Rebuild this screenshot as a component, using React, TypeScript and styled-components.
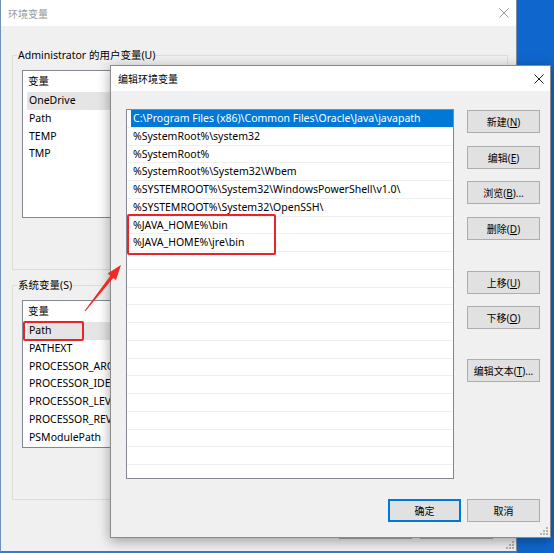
import React from 'react';
import styled, { createGlobalStyle } from 'styled-components';

const FONT = `"Noto Sans", "Noto Sans CJK SC", sans-serif`;

const GlobalStyle = createGlobalStyle`
  html, body { margin: 0; padding: 0; }
  body {
    width: 554px;
    height: 553px;
    overflow: hidden;
    font-family: ${FONT};
    font-size: 10.5px;
    color: #000;
  }
`;

const Desktop = styled.div`
  position: relative;
  width: 554px;
  height: 553px;
  background: #0f67cd;
  overflow: hidden;
  font-family: ${FONT};
  font-size: 10.5px;
`;

const MainWindow = styled.div`
  position: absolute;
  left: 0;
  top: 0;
  width: 517px;
  height: 553px;
  box-sizing: border-box;
  border-left: 1px solid #6f93b8;
  border-right: 1px solid #7d8ea3;
  border-bottom: 2px solid #2f7dd1;
  background: #f0f0f0;
  display: flex;
  flex-direction: column;
`;

const TitleBar = styled.div<{ $height: number; $inactive?: boolean; $padRight: number }>`
  flex: none;
  height: ${(p) => p.$height}px;
  background: #fff;
  display: flex;
  align-items: center;
  justify-content: space-between;
  padding: 0 ${(p) => p.$padRight}px 0 7px;
  color: ${(p) => (p.$inactive ? '#999' : '#000')};
  font-size: 10px;
`;

const WindowBody = styled.div`
  position: relative;
  flex: 1;
  display: flex;
  flex-direction: column;
  padding: 29px 0 0 11px;
`;

const GroupBox = styled.div<{ $mt: number }>`
  position: relative;
  margin-top: ${(p) => p.$mt}px;
  width: 496px;
  height: 215px;
  box-sizing: border-box;
  border: 1px solid #dcdcdc;
  padding: 14px 9px 0 9px;
  display: flex;
  flex-direction: column;
`;

const GroupLabel = styled.span`
  position: absolute;
  left: 4px;
  top: -8px;
  padding: 0 1px;
  background: #f0f0f0;
  line-height: 14px;
`;

const VarList = styled.div`
  height: 148px;
  box-sizing: border-box;
  border: 1px solid #828790;
  background: #fff;
  overflow: hidden;
`;

const VarHeader = styled.div`
  height: 21px;
  line-height: 21px;
  padding-left: 5px;
`;

const VarRow = styled.div<{ $selected?: boolean }>`
  height: 17.75px;
  line-height: 17.75px;
  margin-left: 4px;
  padding-left: 2px;
  background: ${(p) => (p.$selected ? '#e5e5e5' : 'transparent')};
  white-space: nowrap;
`;

const WindowButtons = styled.div`
  display: flex;
  justify-content: flex-end;
  gap: 8px;
  margin-top: 16px;
  padding-right: 23px;
`;

const Button = styled.button<{ $mt?: number; $default?: boolean }>`
  width: 73px;
  height: 23px;
  margin-top: ${(p) => p.$mt ?? 0}px;
  box-sizing: border-box;
  padding: 0;
  background: #e1e1e1;
  border: 1px solid ${(p) => (p.$default ? '#0078d7' : '#adadad')};
  box-shadow: ${(p) => (p.$default ? 'inset 0 0 0 1px #0078d7' : 'none')};
  font-family: ${FONT};
  font-size: 10px;
  color: #000;
  white-space: nowrap;
  u { text-decoration: underline; text-underline-offset: 1px; }
`;

const Grip = styled.svg`
  position: absolute;
  right: 2px;
  bottom: 2px;
`;

const Dialog = styled.div`
  position: absolute;
  left: 110px;
  top: 65px;
  width: 441px;
  height: 473px;
  box-sizing: border-box;
  border: 1px solid #8a8a8a;
  background: #f0f0f0;
  box-shadow: 0 3px 12px rgba(0, 0, 0, 0.35);
  display: flex;
  flex-direction: column;
`;

const DialogBody = styled.div`
  position: relative;
  flex: 1;
  display: flex;
  flex-direction: column;
  padding: 18px 10px 0 15px;
`;

const MainRow = styled.div`
  display: flex;
  gap: 13px;
`;

const EnvList = styled.div`
  width: 328px;
  height: 370px;
  box-sizing: border-box;
  border: 1px solid #828790;
  background: #fff;
  overflow: hidden;
`;

const EnvRow = styled.div`
  height: 17.75px;
  box-sizing: border-box;
  border-bottom: 1px solid #efefef;
  padding-left: 4px;
  display: flex;
`;

const EnvItem = styled.div<{ $selected?: boolean }>`
  flex: 1;
  line-height: 16.75px;
  padding-left: 2px;
  white-space: nowrap;
  background: ${(p) => (p.$selected ? '#0078d7' : 'transparent')};
  color: ${(p) => (p.$selected ? '#fff' : '#000')};
`;

const ButtonColumn = styled.div`
  display: flex;
  flex-direction: column;
  width: 73px;
`;

const BottomRow = styled.div`
  display: flex;
  justify-content: flex-end;
  gap: 6px;
  margin-top: 20px;
`;

const RedBox = styled.div<{ $x: number; $y: number; $w: number; $h: number }>`
  position: absolute;
  left: ${(p) => p.$x}px;
  top: ${(p) => p.$y}px;
  width: ${(p) => p.$w}px;
  height: ${(p) => p.$h}px;
  box-sizing: border-box;
  border: 2px solid #e8232a;
  border-radius: 2px;
  pointer-events: none;
`;

const Arrow = styled.svg`
  position: absolute;
  left: 0;
  top: 0;
  pointer-events: none;
`;

const CloseIcon = ({ color }: { color: string }) => (
  <svg width="10" height="10" viewBox="0 0 10 10">
    <path d="M0.5 0.5 L9.5 9.5 M9.5 0.5 L0.5 9.5" stroke={color} strokeWidth="1" fill="none" />
  </svg>
);

const GripIcon = () => (
  <Grip width="8" height="8" viewBox="0 0 8 8">
    <g fill="#b4b4b4">
      <rect x="6" y="0" width="2" height="2" />
      <rect x="3" y="3" width="2" height="2" />
      <rect x="6" y="3" width="2" height="2" />
      <rect x="0" y="6" width="2" height="2" />
      <rect x="3" y="6" width="2" height="2" />
      <rect x="6" y="6" width="2" height="2" />
    </g>
  </Grip>
);

const userVars = ['OneDrive', 'Path', 'TEMP', 'TMP'];
const sysVars = [
  'Path',
  'PATHEXT',
  'PROCESSOR_ARCHITECTURE',
  'PROCESSOR_IDENTIFIER',
  'PROCESSOR_LEVEL',
  'PROCESSOR_REVISION',
  'PSModulePath',
];

const pathEntries = [
  'C:\\Program Files (x86)\\Common Files\\Oracle\\Java\\javapath',
  '%SystemRoot%\\system32',
  '%SystemRoot%',
  '%SystemRoot%\\System32\\Wbem',
  '%SYSTEMROOT%\\System32\\WindowsPowerShell\\v1.0\\',
  '%SYSTEMROOT%\\System32\\OpenSSH\\',
  '%JAVA_HOME%\\bin',
  '%JAVA_HOME%\\jre\\bin',
];

const TOTAL_ROWS = 21;

export default function App() {
  const rows = Array.from({ length: TOTAL_ROWS }, (_, i) => pathEntries[i] ?? '');
  return (
    <>
      <GlobalStyle />
      <Desktop>
        <MainWindow>
          <TitleBar $height={26} $inactive $padRight={7}>
            <span>环境变量</span>
            <CloseIcon color="#9a9a9a" />
          </TitleBar>
          <WindowBody>
            <GroupBox $mt={0}>
              <GroupLabel>Administrator 的用户变量(U)</GroupLabel>
              <VarList>
                <VarHeader>变量</VarHeader>
                {userVars.map((v, i) => (
                  <VarRow key={v} $selected={i === 0}>
                    {v}
                  </VarRow>
                ))}
              </VarList>
            </GroupBox>
            <GroupBox $mt={15}>
              <GroupLabel>系统变量(S)</GroupLabel>
              <VarList>
                <VarHeader>变量</VarHeader>
                {sysVars.map((v, i) => (
                  <VarRow key={v} $selected={i === 0}>
                    {v}
                  </VarRow>
                ))}
              </VarList>
            </GroupBox>
            <WindowButtons>
              <Button>确定</Button>
              <Button>取消</Button>
            </WindowButtons>
            <GripIcon />
          </WindowBody>
        </MainWindow>

        <Dialog>
          <TitleBar $height={25} $padRight={6}>
            <span>编辑环境变量</span>
            <CloseIcon color="#1e1e1e" />
          </TitleBar>
          <DialogBody>
            <MainRow>
              <EnvList>
                {rows.map((r, i) => (
                  <EnvRow key={i}>
                    <EnvItem $selected={i === 0}>{r}</EnvItem>
                  </EnvRow>
                ))}
              </EnvList>
              <ButtonColumn>
                <Button $mt={1}>
                  新建(<u>N</u>)
                </Button>
                <Button $mt={13}>
                  编辑(<u>E</u>)
                </Button>
                <Button $mt={12}>
                  浏览(<u>B</u>)...
                </Button>
                <Button $mt={13}>
                  删除(<u>D</u>)
                </Button>
                <Button $mt={31}>
                  上移(<u>U</u>)
                </Button>
                <Button $mt={12}>
                  下移(<u>O</u>)
                </Button>
                <Button $mt={30}>
                  编辑文本(<u>T</u>)...
                </Button>
              </ButtonColumn>
            </MainRow>
            <BottomRow>
              <Button $default>确定</Button>
              <Button>取消</Button>
            </BottomRow>
            <GripIcon />
          </DialogBody>
        </Dialog>

        <RedBox $x={127} $y={214} $w={149} $h={41} />
        <RedBox $x={23} $y={321} $w={61} $h={20} />
        <Arrow width="554" height="553" viewBox="0 0 554 553">
          <polygon
            points="84.6,310.7 110.4,275.7 107.6,273.5 121,265 116,280.1 113.2,277.9 85.4,311.3"
            fill="#ee2a24"
          />
        </Arrow>
      </Desktop>
    </>
  );
}
